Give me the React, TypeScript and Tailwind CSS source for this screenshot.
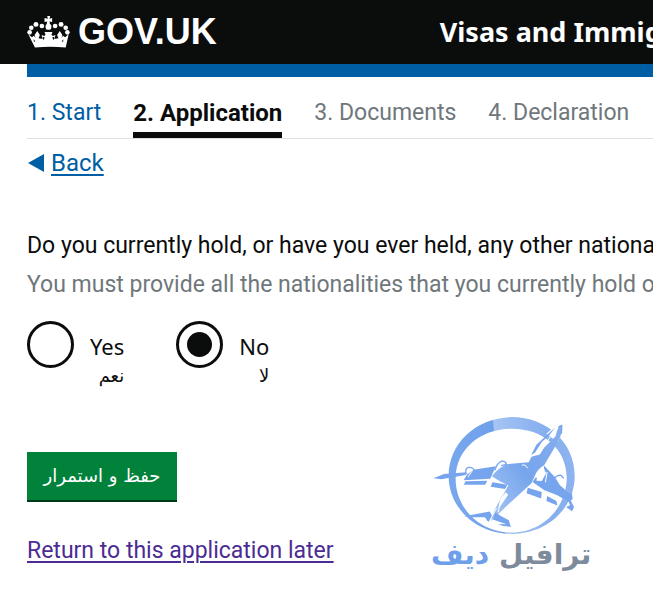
import { useState } from "react";

const steps = [
  { label: "1. Start", state: "done" },
  { label: "2. Application", state: "current" },
  { label: "3. Documents", state: "todo" },
  { label: "4. Declaration", state: "todo" },
];

const stepStyle: Record<string, string> = {
  done: "text-[23px] leading-[30px] text-[#005ea5]",
  current: "text-2xl leading-[30px] font-bold text-[#0b0c0c] border-b-6 border-[#0b0c0c]",
  todo: "text-[23px] leading-[30px] text-[#6f777b]",
};

function Crown() {
  return (
    <svg viewBox="80 40 130 100" className="h-[34px] w-[43px]" fill="#fff" aria-hidden="true">
      <circle cx="88" cy="91" r="7" />
      <circle cx="93" cy="77" r="7" />
      <circle cx="107" cy="67" r="7.5" />
      <circle cx="125" cy="72" r="7" />
      <circle cx="202" cy="91" r="7" />
      <circle cx="197" cy="77" r="7" />
      <circle cx="183" cy="67" r="7.5" />
      <circle cx="165" cy="72" r="7" />
      <path d="M141 42h9l-2 8 8-2v12l-8-2 4 24h-15l4-24-8 2V48l10 2z" />
      <circle cx="145" cy="74" r="9" />
      <path d="M84 97l11 9 6-5 5 7-3-9 8-12 8 12-4 10 12 2-3-12 8 3 4-4-3-8h24l-3 8 4 4 8-3-3 12 12-2-4-10 8-12 8 12-3 9 5-7 6 5 11-9-9 40q-47-5-93 0z" />
      <path d="M100 112l5 6-4 2zM190 112l-5 6 4 2zM127 104l7 3-5 8zM163 104l-7 3 5 8z" fill="#0b0c0c" />
    </svg>
  );
}

function PlaneLogo() {
  return (
    <svg viewBox="30 30 490 360" className="h-[120px] w-[163px]" aria-hidden="true">
      <defs>
        <linearGradient id="ring" x1="0" y1="0.1" x2="1" y2="0">
          <stop offset="0" stopColor="#78a7ee" />
          <stop offset="0.35" stopColor="#6ea0ea" />
          <stop offset="0.36" stopColor="#a6c4f4" />
          <stop offset="0.75" stopColor="#86afee" />
          <stop offset="1" stopColor="#8fb5f0" />
        </linearGradient>
        <linearGradient id="body" x1="0" y1="1" x2="1" y2="0">
          <stop offset="0" stopColor="#a9c7f5" />
          <stop offset="0.5" stopColor="#76a5ec" />
          <stop offset="1" stopColor="#86afee" />
        </linearGradient>
      </defs>
      <path fill="url(#ring)" fillRule="evenodd" d="M276 36C380 36 465 112 465 213C465 310 382 387 276 387C170 387 86 310 86 213C86 112 172 36 276 36ZM276 71C181 71 107 133 107 221C107 310 180 383 276 383C372 383 441 304 441 219C441 132 371 71 276 71Z" />
      <path fill="#fff" d="M380 86L404 64 420 52 431 56 427 84 414 112 404 104Z" />
      <path fill="url(#body)" d="M407 94Q416 58 426 61Q430 72 421 97L415 110 373 181Q353 192 345 213L335 235 266 298Q243 320 213 349L222 319 246 274 264 241 240 229 216 214Q239 184 265 177L327 172 335 155 360 148 373 128Z" />
      <path fill="#77a5ed" d="M40 220L72 207 140 202 137 210 64 223ZM144 204L155 195 228 184 211 221 131 226ZM137 229L202 227 196 239 131 239ZM218 232L263 239 256 252 212 245ZM372 181L406 217 420 240 448 265 454 294 411 270 374 256 338 231 348 217 363 225 375 209ZM324 248L366 261 364 281 320 265ZM382 273L410 288 413 302 380 288Z" />
      <path fill="#77a5ed" d="M334 150L350 119 405 68 390 89 366 111 346 142ZM132 334L210 320 218 336 205 351 195 337 160 337ZM226 322L243 333 267 346 273 366 250 363 235 357 260 358 219 344ZM438 267L456 264 459 282 453 287 463 306 457 319 439 306 451 301Z" />
      <path fill="#fff" stroke="#77a5ed" strokeWidth="4" d="M139 208Q134 189 146 187Q158 186 163 195L150 204M225 196Q232 172 246 168Q258 169 260 178L244 182" />
      <path fill="none" stroke="#77a5ed" strokeWidth="4" d="M405 218Q416 208 425 212L432 220M416 65L426 61 425 86" />
      <path fill="none" stroke="#fff" strokeWidth="3" d="M264 241Q240 282 235 322M306 180Q318 176 324 190M158 196L144 216M382 201L377 232M230 310L210 346M400 82L374 122" />
      <path fill="#fff" d="M353 207L371 189 379 205 366 228 350 227ZM240 286L258 262 265 269 236 312Z" />
    </svg>
  );
}

type AnswerProps = { id: string; label: string; arabic: string; checked: boolean; onPick: () => void };

function Answer({ id, label, arabic, checked, onPick }: AnswerProps) {
  return (
    <div className="flex items-start gap-4">
      <input
        id={id}
        type="radio"
        name="other-nationality"
        checked={checked}
        onChange={onPick}
        className="grid size-[47px] shrink-0 appearance-none place-content-center rounded-full border-3 border-[#0b0c0c] before:size-[25px] before:rounded-full checked:before:bg-[#0b0c0c]"
      />
      <label htmlFor={id} className="flex flex-col pt-[10px] font-['Noto_Sans',sans-serif] text-[22px] leading-[30px]">
        <span>{label}</span>
        <span lang="ar" dir="rtl" className="font-['DejaVu_Sans',sans-serif] text-lg leading-[30px]">{arabic}</span>
      </label>
    </div>
  );
}

export default function App() {
  const [answer, setAnswer] = useState("no");
  return (
    <div className="overflow-hidden bg-white font-[Roboto,sans-serif] text-[23px] leading-[30px] text-[#0b0c0c]">
      <header className="flex h-16 items-center gap-[223px] bg-[#0b0c0c] pl-[27px] font-bold whitespace-nowrap text-white">
        <a href="#home" className="flex shrink-0 items-center gap-2 font-['Liberation_Sans',sans-serif] text-[36px]">
          <Crown />
          GOV.UK
        </a>
        <span className="font-['Noto_Sans',sans-serif] text-[27px] leading-[30px]">Visas and Immigration</span>
      </header>
      <div className="ml-[27px] h-[13px] bg-[#005ea5]" />
      <main className="ml-[27px]">
        <nav aria-label="Progress" className="flex h-[62px] items-end gap-8 border-b border-[#dee0e2] whitespace-nowrap">
          {steps.map((s) => (
            <a key={s.label} href="#step" className={`h-10 shrink-0 ${stepStyle[s.state]}`}>
              {s.label}
            </a>
          ))}
        </nav>
        <a href="#back" className="mt-[9px] flex w-fit items-center gap-[7px] text-2xl leading-[30px] text-[#005ea5]">
          <svg viewBox="0 0 17 18" className="h-[18px] w-[17px]" fill="currentColor" aria-hidden="true">
            <path d="M1 9L17 0V18Z" />
          </svg>
          <span className="underline decoration-2 underline-offset-3">Back</span>
        </a>
        <form onSubmit={(e) => e.preventDefault()}>
          <fieldset>
            <legend className="pt-[53px] whitespace-nowrap">
              Do you currently hold, or have you ever held, any other nationality or citizenship?
            </legend>
            <p className="mt-[9px] whitespace-nowrap text-[#6f777b]">
              You must provide all the nationalities that you currently hold or have held.
            </p>
            <div className="mt-[21px] flex gap-[52px]">
              <Answer id="yes" label="Yes" arabic="نعم" checked={answer === "yes"} onPick={() => setAnswer("yes")} />
              <Answer id="no" label="No" arabic="لا" checked={answer === "no"} onPick={() => setAnswer("no")} />
            </div>
          </fieldset>
          <div className="mt-6 flex items-start gap-24">
            <div className="shrink-0 pt-[37px]">
              <button
                type="submit"
                lang="ar"
                dir="rtl"
                className="block h-[50px] w-[150px] border-b-2 border-[#003618] bg-[#00823b] font-['DejaVu_Sans',sans-serif] text-lg text-white"
              >
                حفظ و استمرار
              </button>
              <a href="#later" className="mt-[34px] block text-[#4c2c92] underline decoration-2 underline-offset-3">
                Return to this application later
              </a>
            </div>
            <div className="flex shrink-0 flex-col items-center">
              <PlaneLogo />
              <p lang="ar" dir="rtl" className="font-['DejaVu_Sans',sans-serif] text-[28px] leading-[40px] font-bold whitespace-nowrap text-[#7e8b9d]">
                ترافيل <span className="text-[#6ea0ea]">ديف</span>
              </p>
            </div>
          </div>
        </form>
      </main>
    </div>
  );
}
